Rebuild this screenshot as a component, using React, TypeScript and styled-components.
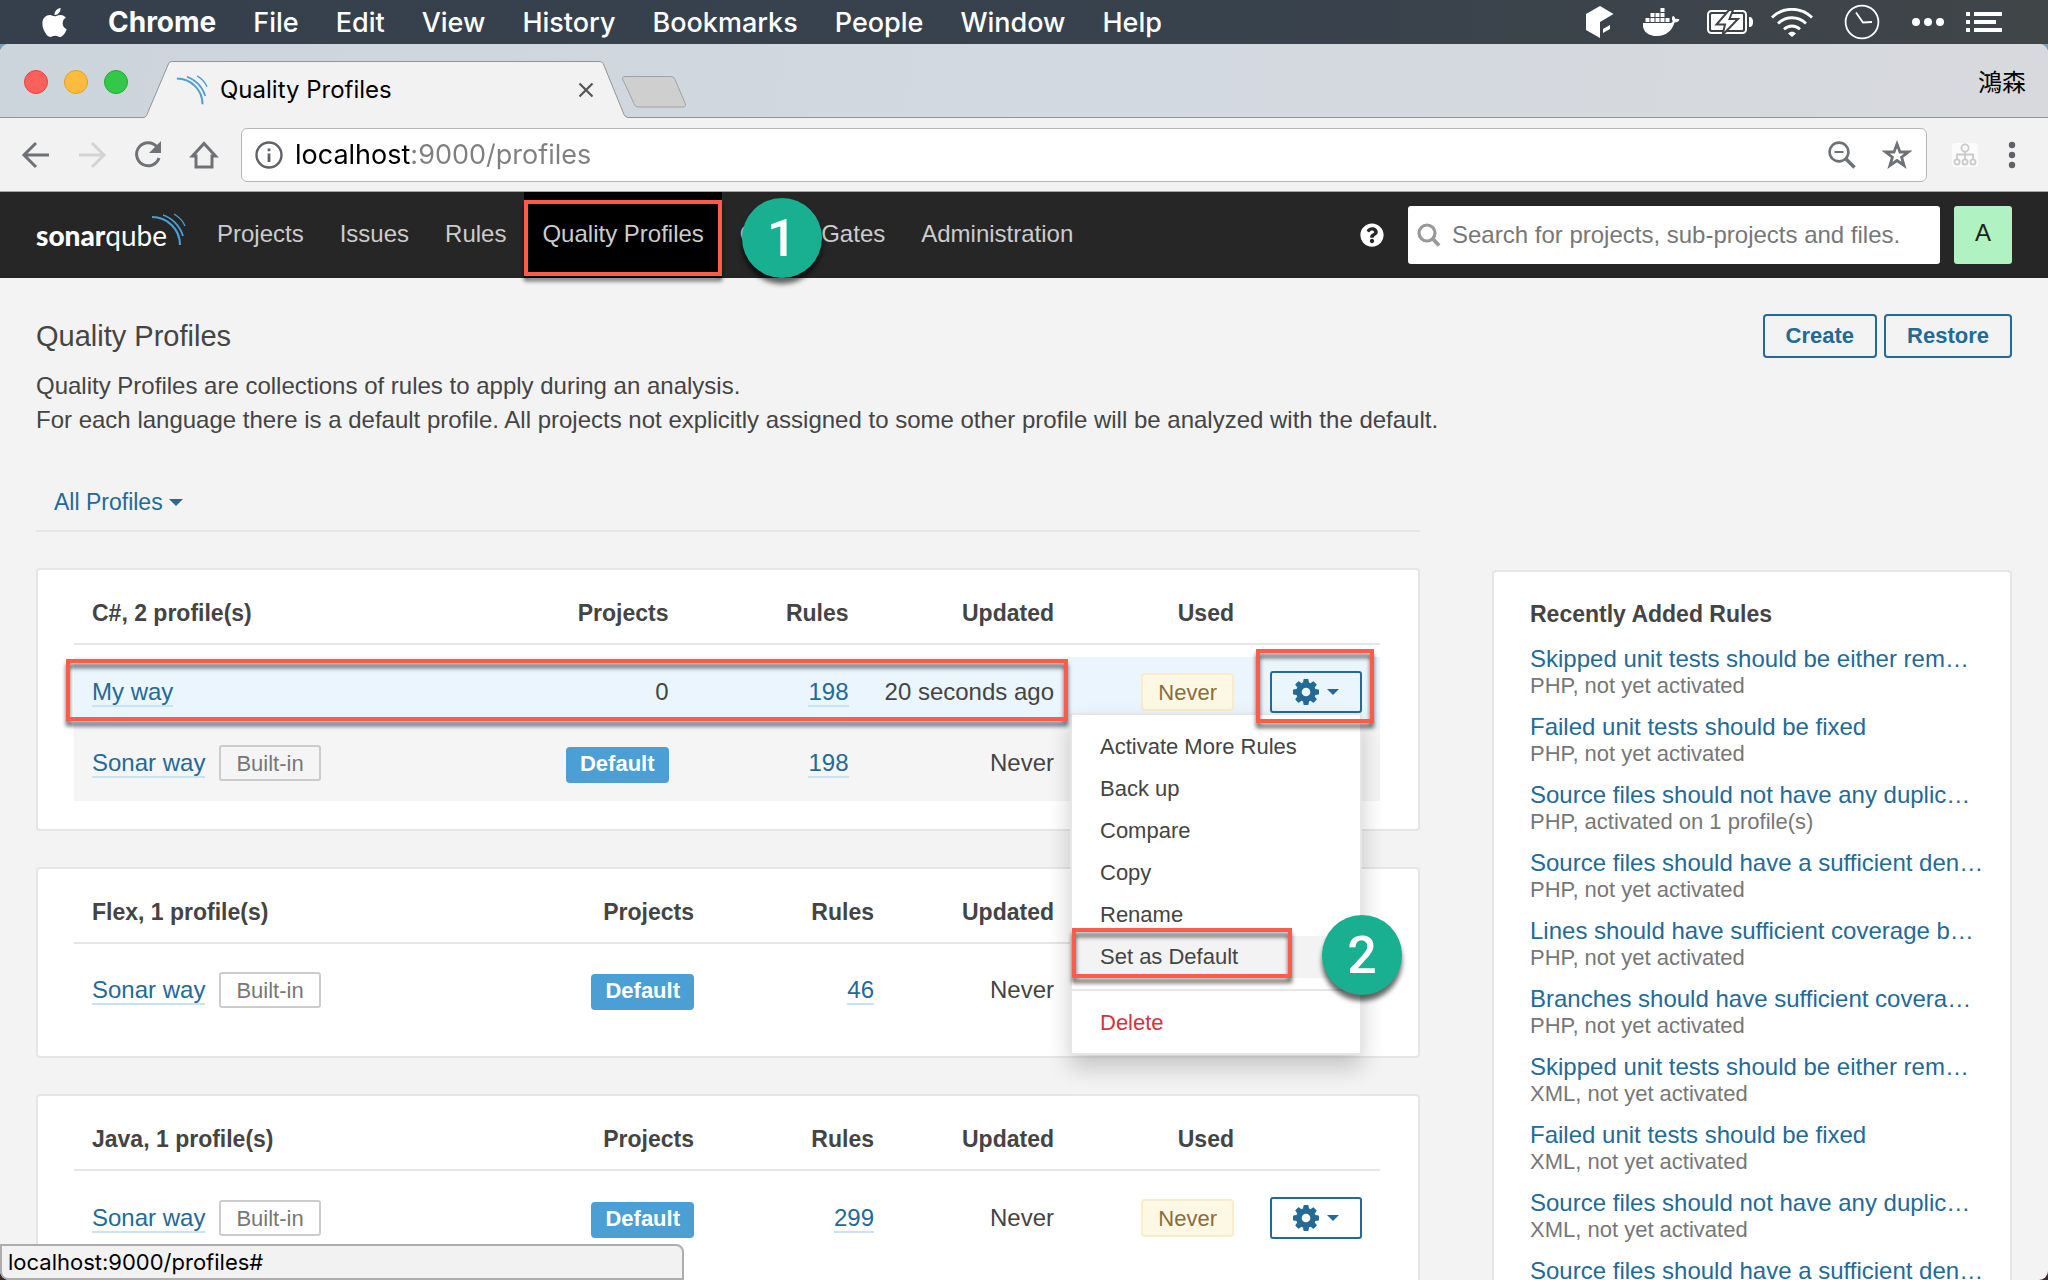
import React from "react";
import styled, { createGlobalStyle, css } from "styled-components";
import { FaApple, FaQuestionCircle } from "react-icons/fa";

const sans = `"Liberation Sans", Arial, "Noto Sans CJK TC", sans-serif`;
const system = `Inter, Roboto, "Noto Sans CJK TC", sans-serif`;
const blue = "#236a97";
const line = "#e6e6e6";
const alertRed = "#ff5a4a";

const GlobalStyle = createGlobalStyle`
  *, *::before, *::after { box-sizing: border-box; }
  body { margin: 0; background: #3b2a26; font-family: ${sans}; color: #444; }
  button, input { font: inherit; color: inherit; margin: 0; padding: 0; border: 0; background: none; }
  a { text-decoration: none; color: ${blue}; }
  svg { display: block; flex: none; }
`;

/* ---------- desktop ---------- */

const Desktop = styled.div`
  display: flex;
  flex-direction: column;
  height: 100vh;
  overflow: hidden;
`;

const MenuBar = styled.header`
  display: flex;
  align-items: center;
  flex: none;
  height: 44px;
  padding: 0 46px 0 38px;
  color: #fff;
  font-family: ${system};
  font-size: 27px;
  background: linear-gradient(90deg, #36404c, #38424d 60%, #404548);
`;

const AppMenus = styled.nav`
  display: flex;
  align-items: center;
  gap: 37px;
`;

const MenuTitle = styled.button<{ $bold?: boolean }>`
  font-size: ${(p) => (p.$bold ? 28 : 27)}px;
  font-weight: ${(p) => (p.$bold ? 700 : 500)};
  white-space: nowrap;
`;

const StatusIcons = styled.div`
  display: flex;
  align-items: center;
  margin-left: auto;
`;

const StatusIcon = styled.svg<{ $gap: number }>`
  margin-left: ${(p) => p.$gap}px;
  color: #fff;
`;

const BrowserBack = styled.div`
  display: flex;
  flex: 1;
  min-height: 0;
  background: linear-gradient(#7ba0bd 0 60px, #3b2a26 60px);
`;

const BrowserWindow = styled.div`
  display: flex;
  flex-direction: column;
  flex: 1;
  min-width: 0;
  overflow: hidden;
  border-radius: 9px;
  background: #f3f3f3;
  position: relative;
`;

/* ---------- browser chrome ---------- */

const TabStrip = styled.div`
  display: flex;
  align-items: flex-end;
  flex: none;
  height: 74px;
  padding: 0 22px 0 24px;
  border-bottom: 1px solid #919497;
  background: linear-gradient(100deg, #ccd4dc, #d2d9e0 50%, #d7d9dd);
`;

const Lights = styled.div`
  display: flex;
  gap: 16px;
  padding-bottom: 23px;
  margin-right: 16px;
`;

const Light = styled.button<{ $fill: string; $edge: string }>`
  width: 24px;
  height: 24px;
  border-radius: 50%;
  background: ${(p) => p.$fill};
  border: 1px solid ${(p) => p.$edge};
`;

const Tab = styled.div`
  position: relative;
  display: flex;
  align-items: center;
  width: 484px;
  height: 57px;
  margin-bottom: -1px;
  padding: 0 34px 0 32px;
  color: #000;
  font-family: ${system};
  font-size: 24px;
  white-space: nowrap;
`;

const TabShape = styled.svg`
  position: absolute;
  inset: 0;
`;

const TabTitle = styled.span`
  position: relative;
  flex: 1;
  margin-left: 12px;
`;

const TabIcon = styled.svg`
  position: relative;
`;

const TabClose = styled.button`
  position: relative;
`;

const NewTab = styled.button`
  margin: 0 0 8px -7px;
`;

const UserName = styled.button`
  align-self: center;
  margin-left: auto;
  color: #000;
  font-family: "Noto Sans CJK TC", sans-serif;
  font-size: 24px;
  line-height: 32px;
`;

const Toolbar = styled.div`
  display: flex;
  align-items: center;
  flex: none;
  height: 74px;
  padding: 0 32px 0 21px;
  border-bottom: 1px solid #a5a5a5;
  background: #f2f2f2;
`;

const ToolButtons = styled.div`
  display: flex;
  gap: 26px;
  margin-right: 22px;
`;

const AddressBar = styled.div`
  display: flex;
  align-items: center;
  flex: 1;
  height: 54px;
  padding: 0 14px 0 13px;
  border: 1px solid #b5b5b5;
  border-radius: 6px;
  background: #fff;
  gap: 26px;
`;

const AddressInput = styled.input`
  flex: 1;
  min-width: 0;
  margin-left: -14px;
  font-family: ${system};
  font-size: 27px;
  line-height: 40px;
  color: #7f7f7f;
  background: linear-gradient(90deg, #000 0 116px, #7f7f7f 116px);
  background-clip: text;
  -webkit-background-clip: text;
  -webkit-text-fill-color: transparent;
  outline: none;
`;

const Extensions = styled.div`
  display: flex;
  align-items: center;
  gap: 30px;
  margin-left: 25px;
`;

const StatusBubble = styled.div`
  position: absolute;
  left: 0;
  bottom: 0;
  width: 684px;
  height: 36px;
  padding: 0 6px;
  border: 2px solid #adadad;
  border-radius: 0 8px 0 8px;
  background: #f2f2f2;
  color: #000;
  font-family: ${system};
  font-size: 22px;
  line-height: 32px;
`;

/* ---------- annotations ---------- */

const Frame = styled.span<{ $inset: string }>`
  position: absolute;
  inset: ${(p) => p.$inset};
  z-index: 5;
  border: 4px solid ${alertRed};
  filter: drop-shadow(0 5px 2px rgba(0, 0, 0, 0.6));
  pointer-events: none;
`;

const Step = styled.span<{ $left: number; $top: number }>`
  position: absolute;
  left: ${(p) => p.$left}px;
  top: ${(p) => p.$top}px;
  z-index: 6;
  width: 80px;
  height: 80px;
  border-radius: 50%;
  background: #18b090;
  box-shadow: 0 6px 5px rgba(0, 0, 0, 0.6);
  color: #fff;
  font-family: Roboto, sans-serif;
  font-size: 52px;
  font-weight: 500;
  line-height: 82px;
  text-align: center;
`;

/* ---------- SonarQube navigation ---------- */

const NavBar = styled.nav`
  display: flex;
  align-items: center;
  flex: none;
  height: 86px;
  padding: 0 36px;
  background: #262626;
`;

const Logo = styled.a`
  display: flex;
  position: relative;
  width: 150px;
  margin-right: 13px;
  color: #fff;
  font-family: Lato, sans-serif;
  font-size: 28px;
  line-height: 38px;
`;

const LogoStrong = styled.span`
  font-weight: 900;
`;
const LogoLight = styled.span`
  font-weight: 400;
`;

const LogoWave = styled.svg`
  position: absolute;
  right: 0;
  top: -3px;
`;

const NavLink = styled.a<{ $active?: boolean }>`
  position: relative;
  height: 86px;
  padding: 0 18px;
  color: #ccc;
  background: ${(p) => (p.$active ? "#000" : "transparent")};
  font-size: 24px;
  line-height: 84px;
  white-space: nowrap;
`;

const NavEnd = styled.div`
  display: flex;
  align-items: center;
  margin-left: auto;
  color: #fff;
`;

const SearchBox = styled.label`
  display: flex;
  align-items: center;
  width: 532px;
  height: 58px;
  margin: 0 14px 0 24px;
  padding: 0 9px;
  gap: 11px;
  border-radius: 3px;
  background: #fff;
`;

const SearchInput = styled.input`
  flex: 1;
  min-width: 0;
  font-size: 24px;
  line-height: 36px;
  color: #444;
  outline: none;
  &::placeholder { color: #777; opacity: 1; }
`;

const Avatar = styled.button`
  width: 58px;
  height: 58px;
  padding-bottom: 4px;
  border-radius: 3px;
  background: #b0f2c2;
  color: #222;
  font-size: 24px;
`;

/* ---------- page ---------- */

const Page = styled.main`
  flex: 1;
  min-height: 0;
  overflow: hidden;
  padding: 36px 36px 0;
  font-size: 24px;
`;

const PageHeader = styled.div`
  display: flex;
  justify-content: space-between;
  align-items: flex-start;
`;

const Title = styled.h1`
  margin: 0 0 11px;
  font-size: 29px;
  font-weight: 400;
  line-height: 44px;
`;

const Description = styled.p`
  margin: 0;
  line-height: 34px;
`;

const Actions = styled.div`
  display: flex;
  gap: 7px;
`;

const OutlineButton = styled.button`
  height: 44px;
  padding: 0 21px;
  border: 2px solid ${blue};
  border-radius: 4px;
  color: ${blue};
  font-size: 22px;
  font-weight: 700;
`;

const Columns = styled.div`
  display: grid;
  grid-template-columns: minmax(0, 1fr) 520px;
  column-gap: 72px;
`;

const Filter = styled.div`
  display: flex;
  grid-column: 1;
  margin-bottom: 36px;
  padding: 48px 18px 11px;
  border-bottom: 2px solid ${line};
`;

const FilterButton = styled.button`
  display: flex;
  align-items: center;
  gap: 6px;
  color: ${blue};
  font-size: 23px;
  line-height: 34px;
`;

const Groups = styled.div`
  display: flex;
  flex-direction: column;
  gap: 36px;
  grid-column: 1;
`;

const panel = css`
  border: 2px solid ${line};
  border-radius: 4px;
  background: #fff;
`;

const Group = styled.section`
  ${panel}
  padding: 27px 38px 28px 36px;
`;

const Table = styled.table`
  width: 100%;
  border-collapse: separate;
  border-spacing: 0;
`;

const HeadCell = styled.th<{ $name?: boolean }>`
  width: ${(p) => (p.$name ? "auto" : "180px")};
  height: 48px;
  padding: 0 18px 14px;
  border-bottom: 2px solid ${line};
  font-size: 23px;
  text-align: ${(p) => (p.$name ? "left" : "right")};
  line-height: 32px;
  white-space: nowrap;
  &:last-child { width: 128px; }
`;

const Spacer = styled.td`
  height: 12px;
  padding: 0;
`;

const Row = styled.tr<{ $tone?: string }>`
  position: relative;
  background: ${(p) => p.$tone ?? "transparent"};
`;

const Cell = styled.td<{ $left?: boolean }>`
  height: 72px;
  padding: 16px 18px 0;
  text-align: ${(p) => (p.$left ? "left" : "right")};
  vertical-align: baseline;
  line-height: 36px;
  white-space: nowrap;
`;

const ActionCell = styled.td`
  height: 72px;
  padding: 14px 18px 0;
  vertical-align: top;
`;

const Link = styled.a`
  border-bottom: 2px solid #cae3f2;
`;

const BuiltIn = styled.span`
  display: inline-block;
  height: 36px;
  margin-left: 14px;
  padding: 0 15px;
  border: 2px solid #ccc;
  border-radius: 3px;
  color: #777;
  font-size: 22px;
  line-height: 33px;
`;

const DefaultBadge = styled.span`
  display: inline-block;
  height: 36px;
  padding: 0 14px;
  border-radius: 4px;
  background: #4b9fd5;
  color: #fff;
  font-size: 22px;
  font-weight: 700;
  line-height: 34px;
`;

const NeverBadge = styled.span`
  display: inline-block;
  height: 38px;
  padding: 0 15px;
  border: 2px solid #faebcc;
  border-radius: 4px;
  background: #fcf8e3;
  color: #8a6d3b;
  font-size: 22px;
  line-height: 36px;
`;

const ActionWrap = styled.div`
  position: relative;
  display: flex;
`;

const GearButton = styled.button`
  display: flex;
  align-items: center;
  justify-content: center;
  gap: 8px;
  width: 92px;
  height: 42px;
  border: 2px solid ${blue};
  border-radius: 3px;
  color: ${blue};
`;

const Menu = styled.div`
  position: absolute;
  right: 0;
  top: 42px;
  z-index: 4;
  display: flex;
  flex-direction: column;
  width: 292px;
  padding: 11px 0 9px;
  border: 2px solid ${line};
  background: #fff;
  box-shadow: 0 12px 22px rgba(0, 0, 0, 0.2);
`;

const MenuItem = styled.button<{ $hover?: boolean; $danger?: boolean }>`
  height: 42px;
  padding: 0 28px;
  background: ${(p) => (p.$hover ? "#f3f3f3" : "transparent")};
  color: ${(p) => (p.$danger ? "#d4333f" : "#444")};
  font-size: 22px;
  text-align: left;
  white-space: nowrap;
`;

const MenuItemWrap = styled.div`
  position: relative;
  display: grid;
`;

const Divider = styled.hr`
  width: 100%;
  margin: 11px 0;
  border: 0;
  border-top: 2px solid ${line};
`;

const Sidebar = styled.aside`
  ${panel}
  grid-column: 2;
  height: 1400px;
  margin-top: 2px;
  padding: 26px 36px;
`;

const SideTitle = styled.h2`
  margin: 0 0 15px;
  font-size: 23px;
  font-weight: 700;
  line-height: 32px;
`;

const Rule = styled.div`
  display: flex;
  flex-direction: column;
  height: 68px;
  white-space: nowrap;
`;

const RuleLink = styled.a`
  font-size: 24px;
  line-height: 28px;
`;

const RuleNote = styled.span`
  color: #777;
  font-size: 22px;
  line-height: 26px;
`;

/* ---------- drawings ---------- */

const Caret = ({ size = 14 }: { size?: number }) => (
  <svg width={size} height={size / 2} viewBox="0 0 14 7">
    <path d="M0 0h14L7 7z" fill="currentColor" />
  </svg>
);

const Gear = () => (
  <svg width="26" height="26" viewBox="0 128 1536 1536">
    <path
      fill="currentColor"
      d="M1024 896q0-106-75-181t-181-75-181 75-75 181 75 181 181 75 181-75 75-181zm512-109v222q0 12-8 23t-20 13l-185 28q-19 54-39 91 35 50 107 138 10 12 10 25t-9 23q-27 37-99 108t-94 71q-12 0-26-9l-138-108q-44 23-91 38-16 136-29 186-7 28-36 28h-222q-14 0-24.500-8.500t-11.500-21.500l-28-184q-49-16-90-37l-141 107q-10 9-25 9-14 0-25-11-126-114-165-168-7-10-7-23 0-12 8-23 15-21 51-66.500t54-70.500q-27-50-41-99l-183-27q-13-2-21-12.500t-8-23.500v-222q0-12 8-23t19-13l186-28q14-46 39-92-40-57-107-138-10-12-10-24 0-10 9-23 26-36 98.500-107.500t94.500-71.500q13 0 26 10l138 107q44-23 91-38 16-136 29-186 7-28 36-28h222q14 0 24.500 8.500t11.500 21.500l28 184q49 16 90 37l142-107q9-9 24-9 13 0 25 10 129 119 165 170 7 8 7 22 0 12-8 23-15 21-51 66.500t-54 70.500q26 50 41 98l183 28q13 2 21 12.500t8 23.500z"
    />
  </svg>
);

const waves = (
  <g fill="none" stroke="#4b9fd5">
    <path d="M1 4C16 4 29 16 29 32" strokeWidth="2.200" />
    <path d="M12 2C21 5 29 13 32 23" strokeWidth="1.800" />
    <path d="M23 1C28 4 32 8 34 13" strokeWidth="1.400" />
  </g>
);

const iconGrey = "#6e7276";

const StatusGlyphs = () => (
  <StatusIcons>
    <StatusIcon $gap={0} width="28" height="32" viewBox="0 0 28 32">
      <path d="M14 0l13.500 8L14 16v16L0 24V8z" fill="currentColor" />
      <path d="M17 23l7-4v4l-7 4z" fill="currentColor" />
    </StatusIcon>
    <StatusIcon $gap={29} width="37" height="28" viewBox="0 0 37 28">
      <path
        d="M0 15h27c1.500 0 2.500-.6 2.700-2-1.200-1.800-1-3.800.4-5.300 1.400.8 2 2 2.200 3.300 1.500-.3 3-.2 4.200.6-.6 2-2.600 3-5 3C29 23 23 28 14 28 4 28-1 22 0 15z"
        fill="currentColor"
      />
      <path
        d="M2.500 10h4v4h-4zM7.500 10h4v4h-4zM12.500 10h4v4h-4zM17.500 10h4v4h-4zM22.500 10h4v4h-4zM7.500 5h4v4h-4zM12.500 5h4v4h-4zM17.500 5h4v4h-4zM17.500 0h4v4h-4z"
        fill="currentColor"
      />
    </StatusIcon>
    <StatusIcon $gap={27} width="46" height="26" viewBox="0 0 46 26">
      <rect x="1" y="2" width="38" height="22" rx="3.500" fill="none" stroke="currentColor" strokeWidth="2" />
      <rect x="4" y="5" width="32" height="16" rx="1" fill="currentColor" />
      <path d="M22 1L9.500 15.500H18L15.500 26 31 10h-8.500L26 1z" fill="currentColor" stroke="#3f4549" strokeWidth="2" />
      <path d="M42 8c3 0 4 2 4 5s-1 5-4 5z" fill="currentColor" />
    </StatusIcon>
    <StatusIcon $gap={18} width="42" height="29" viewBox="0 0 42 29">
      <g fill="none" stroke="currentColor" strokeWidth="2.800">
        <path d="M1 9.500C12-1.500 30-1.500 41 9.500" />
        <path d="M7 15.500c8-7.700 20-7.700 28 0" />
        <path d="M13 21.300c4.800-4.400 11.200-4.400 16 0" />
      </g>
      <path d="M17 25.500c2.400-2.200 5.600-2.200 8 0L21 29z" fill="currentColor" />
    </StatusIcon>
    <StatusIcon $gap={31} width="36" height="36" viewBox="0 0 36 36">
      <circle cx="18" cy="18" r="16.400" fill="none" stroke="currentColor" strokeWidth="1.800" />
      <path d="M12 8.500l7 10 9-.5" fill="none" stroke="currentColor" strokeWidth="1.800" />
    </StatusIcon>
    <StatusIcon $gap={32} width="32" height="8" viewBox="0 0 32 8">
      <path d="M4 0a4 4 0 110 8 4 4 0 010-8zM16 0a4 4 0 110 8 4 4 0 010-8zM28 0a4 4 0 110 8 4 4 0 010-8z" fill="currentColor" />
    </StatusIcon>
    <StatusIcon $gap={22} width="36" height="20" viewBox="0 0 36 20">
      <path d="M0 0h4v4H0zM8 0h28v4H8zM0 8h4v4H0zM8 8h22v4H8zM0 16h4v4H0zM8 16h28v4H8z" fill="currentColor" />
    </StatusIcon>
  </StatusIcons>
);

const ToolIcon = ({ d, faded }: { d: string; faded?: boolean }) => (
  <svg width="30" height="30" viewBox="0 0 30 30" fill="none" stroke={faded ? "#d4d4d4" : iconGrey} strokeWidth="3">
    <path d={d} />
  </svg>
);

/* ---------- content ---------- */

const menus = ["File", "Edit", "View", "History", "Bookmarks", "People", "Window", "Help"];

type Profile = {
  name: string;
  builtIn?: boolean;
  isDefault?: boolean;
  rules: number;
  updated: string;
  used?: string;
  action?: boolean;
  open?: boolean;
  tone?: string;
};

const groups: { title: string; profiles: Profile[] }[] = [
  {
    title: "C#, 2 profile(s)",
    profiles: [
      { name: "My way", rules: 198, updated: "20 seconds ago", used: "Never", action: true, open: true, tone: "#ebf5fe" },
      { name: "Sonar way", builtIn: true, isDefault: true, rules: 198, updated: "Never", tone: "#f5f5f5" },
    ],
  },
  {
    title: "Flex, 1 profile(s)",
    profiles: [{ name: "Sonar way", builtIn: true, isDefault: true, rules: 46, updated: "Never" }],
  },
  {
    title: "Java, 1 profile(s)",
    profiles: [{ name: "Sonar way", builtIn: true, isDefault: true, rules: 299, updated: "Never", used: "Never", action: true }],
  },
];

const recent = [
  ["Skipped unit tests should be either rem…", "PHP, not yet activated"],
  ["Failed unit tests should be fixed", "PHP, not yet activated"],
  ["Source files should not have any duplic…", "PHP, activated on 1 profile(s)"],
  ["Source files should have a sufficient den…", "PHP, not yet activated"],
  ["Lines should have sufficient coverage b…", "PHP, not yet activated"],
  ["Branches should have sufficient covera…", "PHP, not yet activated"],
  ["Skipped unit tests should be either rem…", "XML, not yet activated"],
  ["Failed unit tests should be fixed", "XML, not yet activated"],
  ["Source files should not have any duplic…", "XML, not yet activated"],
  ["Source files should have a sufficient den…", ""],
];

const ProfileMenu = () => (
  <Menu role="menu">
    {["Activate More Rules", "Back up", "Compare", "Copy", "Rename"].map((label) => (
      <MenuItem key={label} role="menuitem">{label}</MenuItem>
    ))}
    <MenuItemWrap>
      <MenuItem role="menuitem" $hover>Set as Default</MenuItem>
      <Frame $inset="-8px 68px 0 0" />
      <Step $left={250} $top={-21}>2</Step>
    </MenuItemWrap>
    <Divider />
    <MenuItem role="menuitem" $danger>Delete</MenuItem>
  </Menu>
);

const ProfileRow = ({ profile: p }: { profile: Profile }) => (
  <Row $tone={p.tone}>
    <Cell $left>
      <Link href="#">{p.name}</Link>
      {p.builtIn && <BuiltIn>Built-in</BuiltIn>}
      {p.open && <Frame $inset="2px 312px 8px -8px" />}
    </Cell>
    <Cell>{p.isDefault ? <DefaultBadge>Default</DefaultBadge> : 0}</Cell>
    <Cell><Link href="#">{p.rules}</Link></Cell>
    <Cell>{p.updated}</Cell>
    <Cell>{p.used && <NeverBadge>{p.used}</NeverBadge>}</Cell>
    <ActionCell>
      {p.action && (
        <ActionWrap>
          <GearButton aria-label="Profile actions"><Gear /><Caret size={12} /></GearButton>
          {p.open && <ProfileMenu />}
          {p.open && <Frame $inset="-22px -12px -10px -14px" />}
        </ActionWrap>
      )}
    </ActionCell>
  </Row>
);

export default function App() {
  return (
    <Desktop>
      <GlobalStyle />
      <MenuBar>
        <AppMenus>
          <FaApple size={33} />
          <MenuTitle $bold>Chrome</MenuTitle>
          {menus.map((m) => <MenuTitle key={m}>{m}</MenuTitle>)}
        </AppMenus>
        <StatusGlyphs />
      </MenuBar>

      <BrowserBack>
        <BrowserWindow>
          <TabStrip>
            <Lights>
              <Light aria-label="Close" $fill="#fc605b" $edge="#e0443e" />
              <Light aria-label="Minimize" $fill="#fdbc40" $edge="#dfa023" />
              <Light aria-label="Zoom" $fill="#34c84a" $edge="#1dad2b" />
            </Lights>
            <Tab>
              <TabShape width="484" height="57" viewBox="0 0 484 57">
                <path
                  d="M0 56.500C2 56 3 54 4 51L24 4C25 1 26 .5 29 .5H455c3 0 4 1 5 4L479 51c1 3 2 5 5 5.500V57H0z"
                  fill="#f2f2f2"
                />
                <path d="M0 56.500C2 56 3 54 4 51L24 4C25 1 26 .5 29 .5H455c3 0 4 1 5 4L479 51c1 3 2 5 5 5.500" fill="none" stroke="#919497" />
              </TabShape>
              <TabIcon width="32" height="32" viewBox="0 0 35 33">{waves}</TabIcon>
              <TabTitle>Quality Profiles</TabTitle>
              <TabClose aria-label="Close tab">
                <svg width="16" height="16" viewBox="0 0 16 16">
                  <path d="M1.500 1.500l13 13M14.500 1.500l-13 13" stroke="#555" strokeWidth="2.200" />
                </svg>
              </TabClose>
            </Tab>
            <NewTab aria-label="New tab">
              <svg width="66" height="34" viewBox="0 0 66 34">
                <path d="M4 1.500H49c2.500 0 4 .5 5 3L64 28c1 2.500.5 4-2 4H18c-3 0-4-1-5-3.500L2 5C1 2.500 1.500 1.500 4 1.500z" fill="#cfcfcf" stroke="#a0a2a4" />
              </svg>
            </NewTab>
            <UserName>鴻森</UserName>
          </TabStrip>

          <Toolbar>
            <ToolButtons>
              <button aria-label="Back"><ToolIcon d="M28 15H4M15 3L3 15l12 12" /></button>
              <button aria-label="Forward"><ToolIcon faded d="M2 15h24M15 3l12 12-12 12" /></button>
              <button aria-label="Reload">
                <svg width="30" height="30" viewBox="0 0 30 30">
                  <path d="M24 7A11.500 11.500 0 1026 18" fill="none" stroke={iconGrey} strokeWidth="3" />
                  <path d="M28 1v12H16z" fill={iconGrey} />
                </svg>
              </button>
              <button aria-label="Home"><ToolIcon d="M15 3.500L3.500 16H7v11h16V16h3.500z" /></button>
            </ToolButtons>
            <AddressBar>
              <svg width="28" height="28" viewBox="0 0 28 28">
                <circle cx="14" cy="14" r="12.500" fill="none" stroke="#5f6368" strokeWidth="2.400" />
                <path d="M12.600 12.500h2.800V21h-2.800zM12.600 7.500h2.800v2.800h-2.800z" fill="#5f6368" />
              </svg>
              <AddressInput aria-label="Address" defaultValue="localhost:9000/profiles" />
              <svg width="28" height="28" viewBox="0 0 28 28" fill="none" stroke={iconGrey}>
                <circle cx="11" cy="11" r="9.400" strokeWidth="2.600" />
                <path d="M6.500 11h9" strokeWidth="2" />
                <path d="M18 18l8.500 8.500" strokeWidth="3.600" />
              </svg>
              <svg width="30" height="30" viewBox="0 0 30 30">
                <path d="M15 4l3 8h8.300l-6.700 5.200 2.500 8.300-7.100-5-7.100 5 2.500-8.300L3.700 12H12z" fill="none" stroke={iconGrey} strokeWidth="2.800" />
              </svg>
            </AddressBar>
            <Extensions>
              <svg width="26" height="24" viewBox="0 0 26 24">
                <rect width="26" height="24" rx="4" fill="#fbfbfb" />
                <g fill="none" stroke="#cacaca" strokeWidth="1.800">
                  <circle cx="13" cy="5" r="3.600" />
                  <path d="M13 9v7M5 16v-4.500h16V16" />
                  <circle cx="5" cy="19" r="2.600" />
                  <circle cx="13" cy="19" r="2.600" />
                  <circle cx="21" cy="19" r="2.600" />
                </g>
              </svg>
              <svg width="8" height="28" viewBox="0 0 8 28" fill="#5f6368">
                <circle cx="4" cy="4" r="3.200" />
                <circle cx="4" cy="14" r="3.200" />
                <circle cx="4" cy="24" r="3.200" />
              </svg>
            </Extensions>
          </Toolbar>

          <NavBar>
            <Logo href="#" aria-label="sonarqube">
              <LogoStrong>sonar</LogoStrong><LogoLight>qube</LogoLight>
              <LogoWave width="35" height="33" viewBox="0 0 35 33">{waves}</LogoWave>
            </Logo>
            <NavLink href="#">Projects</NavLink>
            <NavLink href="#">Issues</NavLink>
            <NavLink href="#">Rules</NavLink>
            <NavLink href="#" $active>
              Quality Profiles
              <Frame $inset="8px 0 2px 0" />
            </NavLink>
            <NavLink href="#">
              Quality Gates
              <Step $left={20} $top={6}>1</Step>
            </NavLink>
            <NavLink href="#">Administration</NavLink>
            <NavEnd>
              <FaQuestionCircle size={24} />
              <SearchBox>
                <svg width="24" height="24" viewBox="0 0 24 24" fill="none" stroke="#999">
                  <circle cx="10" cy="10" r="8" strokeWidth="3.200" />
                  <path d="M15.500 15.500l6.500 7" strokeWidth="3.800" />
                </svg>
                <SearchInput aria-label="Search" placeholder="Search for projects, sub-projects and files." />
              </SearchBox>
              <Avatar>A</Avatar>
            </NavEnd>
          </NavBar>

          <Page>
            <PageHeader>
              <div>
                <Title>Quality Profiles</Title>
                <Description>
                  Quality Profiles are collections of rules to apply during an analysis.
                  <br />
                  For each language there is a default profile. All projects not explicitly assigned to some other profile will be analyzed with the default.
                </Description>
              </div>
              <Actions>
                <OutlineButton>Create</OutlineButton>
                <OutlineButton>Restore</OutlineButton>
              </Actions>
            </PageHeader>
            <Columns>
              <Filter>
                <FilterButton>All Profiles <Caret /></FilterButton>
              </Filter>
              <Groups>
                {groups.map((g) => (
                  <Group key={g.title}>
                    <Table>
                      <thead>
                        <tr>
                          <HeadCell $name>{g.title}</HeadCell>
                          <HeadCell>Projects</HeadCell>
                          <HeadCell>Rules</HeadCell>
                          <HeadCell>Updated</HeadCell>
                          <HeadCell>Used</HeadCell>
                          <HeadCell aria-label="Actions" />
                        </tr>
                      </thead>
                      <tbody>
                        <tr><Spacer colSpan={6} /></tr>
                        {g.profiles.map((p) => <ProfileRow key={p.name} profile={p} />)}
                      </tbody>
                    </Table>
                  </Group>
                ))}
              </Groups>
              <Sidebar>
                <SideTitle>Recently Added Rules</SideTitle>
                {recent.map(([title, note], i) => (
                  <Rule key={i}>
                    <RuleLink href="#">{title}</RuleLink>
                    <RuleNote>{note}</RuleNote>
                  </Rule>
                ))}
              </Sidebar>
            </Columns>
          </Page>
          <StatusBubble>localhost:9000/profiles#</StatusBubble>
        </BrowserWindow>
      </BrowserBack>
    </Desktop>
  );
}
